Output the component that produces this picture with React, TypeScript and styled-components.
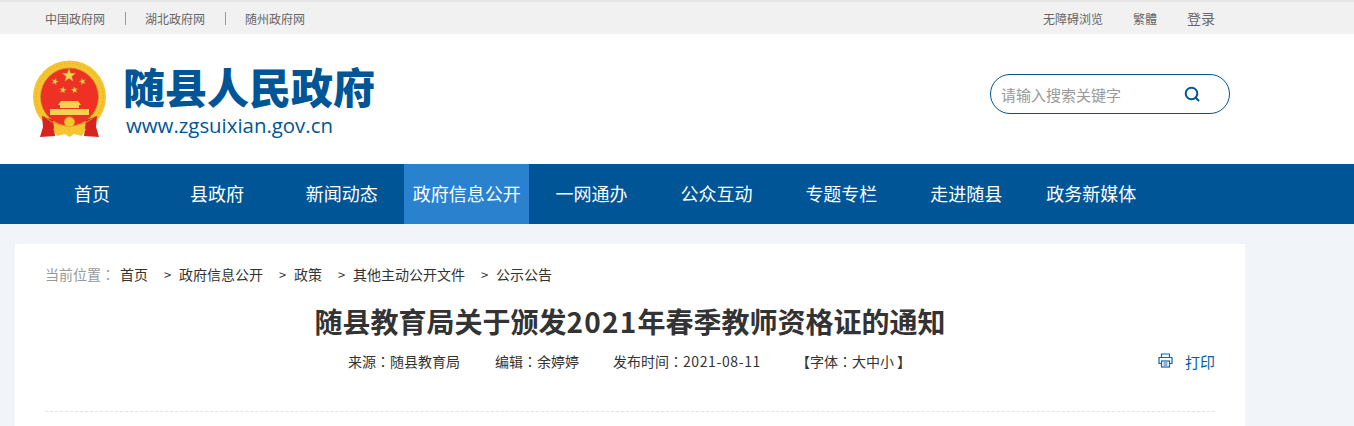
import styled, { createGlobalStyle } from "styled-components";

const GlobalStyle = createGlobalStyle`
  html, body {
    margin: 0;
    padding: 0;
    background: #f1f4f8;
    font-family: "Noto Sans CJK SC", "Liberation Sans", sans-serif;
  }
`;

const TopBar = styled.div`
  display: flex;
  justify-content: space-between;
  align-items: center;
  height: 32px;
  padding: 0 139px 0 45px;
  border-top: 2px solid #e6e6e6;
  background: #f1f1f1;
  font-size: 12px;
  color: #666;
`;

const TopLinks = styled.div`
  display: flex;
  align-items: center;
  gap: 19.5px;
`;

const TopDivider = styled.span`
  width: 1px;
  height: 13px;
  background: #999;
`;

const TopTools = styled.div`
  display: flex;
  align-items: center;
  gap: 30px;
`;

const Login = styled.span`
  font-size: 14px;
`;

const Header = styled.header`
  display: flex;
  justify-content: space-between;
  align-items: center;
  height: 130px;
  padding: 0 124px 0 32px;
  background: #fff;
`;

const Brand = styled.div`
  display: flex;
  align-items: center;
  gap: 15px;
`;

const BrandText = styled.div`
  display: flex;
  flex-direction: column;
  color: #005596;
`;

const BrandName = styled.div`
  font-size: 42px;
  line-height: 52px;
  font-weight: 900;
`;

const BrandUrl = styled.div`
  margin-left: 3px;
  font-family: "Open Sans", sans-serif;
  font-size: 20.4px;
  line-height: 26px;
  font-weight: 500;
`;

const Search = styled.div`
  display: flex;
  justify-content: space-between;
  align-items: center;
  box-sizing: border-box;
  width: 240px;
  height: 40px;
  margin-bottom: 10px;
  padding: 0 29px 0 10px;
  border: 1px solid #005596;
  border-radius: 20px;
  font-size: 15px;
  color: #999;
`;

const Nav = styled.nav`
  display: flex;
  height: 60px;
  padding-left: 29.6px;
  background: #005596;
`;

const NavItem = styled.a<{ $active?: boolean }>`
  width: 124.9px;
  line-height: 58px;
  text-align: center;
  font-size: 18px;
  color: #fff;
  background: ${({ $active }) => ($active ? "#2a82ce" : "transparent")};
`;

const Card = styled.main`
  box-sizing: border-box;
  height: 182px;
  margin: 20px 109px 0 15px;
  padding: 19px 30px 0;
  background: #fff;
`;

const Crumbs = styled.div`
  display: flex;
  align-items: center;
  height: 22px;
  font-size: 14px;
  color: #333;
`;

const CrumbLabel = styled.span`
  width: 75px;
  color: #999;
`;

const Crumb = styled.span`
  & + &::before {
    content: ">";
    display: inline-block;
    width: 15px;
    margin-left: 16px;
    font-size: 13px;
  }
`;

const Title = styled.h1`
  margin: 14px 0 0;
  font-size: 28px;
  line-height: 44px;
  font-weight: 700;
  text-align: center;
  color: #333;
`;

const Digits = styled.span`
  letter-spacing: 0.043em;
`;

const Colon = styled.span`
  font-family: "Noto Sans CJK TC", sans-serif;
`;

const MetaRow = styled.div`
  display: flex;
  align-items: center;
  height: 24px;
  margin-top: 6px;
  padding-left: 303px;
  font-size: 14px;
  color: #333;
`;

const MetaItem = styled.span<{ $gap: number }>`
  margin-right: ${({ $gap }) => $gap}px;
`;

const Print = styled.a`
  display: flex;
  align-items: center;
  gap: 12px;
  margin-left: auto;
  font-size: 15px;
  color: #005eab;

  svg {
    margin: -1px 0 0 1px;
  }
`;

const Rule = styled.div`
  margin-top: 38px;
  border-top: 1px dashed #e3e3e3;
`;

const navItems = ["首页", "县政府", "新闻动态", "政府信息公开", "一网通办", "公众互动", "专题专栏", "走进随县", "政务新媒体"];
const crumbs = ["首页", "政府信息公开", "政策", "其他主动公开文件", "公示公告"];

function Star({ x, y, r, rot = 0 }: { x: number; y: number; r: number; rot?: number }) {
  const points = Array.from({ length: 10 }, (_, i) => {
    const a = (i * Math.PI) / 5 - Math.PI / 2 + rot;
    const d = i % 2 ? r * 0.4 : r;
    return `${x + d * Math.cos(a)},${y + d * Math.sin(a)}`;
  }).join(" ");
  return <polygon points={points} fill="#f8d24e" stroke="#b8862b" strokeWidth="0.4" />;
}

function Emblem() {
  return (
    <svg width="76" height="80" viewBox="0 0 76 80">
      <circle cx="37.5" cy="38" r="36.5" fill="#f5c52f" />
      <circle cx="37.5" cy="38" r="33.5" fill="none" stroke="#e8b029" strokeWidth="1" strokeDasharray="2 2" />
      <circle cx="37.5" cy="38" r="29" fill="#ee3124" stroke="#c9922c" strokeWidth="0.8" />
      <Star x={37} y={16.5} r={7.2} />
      <Star x={23} y={22.5} r={3.6} rot={0.3} />
      <Star x={50.5} y={22.5} r={3.6} rot={-0.3} />
      <Star x={31} y={31} r={3.6} rot={0.15} />
      <Star x={42.5} y={31} r={3.6} rot={-0.15} />
      <path d="M29 42 L46 42 L49 46 L47 46 L47 49 L28 49 L28 46 L26 46 Z" fill="#f8d24e" />
      <rect x="18" y="50" width="39" height="6" fill="#f8d24e" />
      <path d="M10 57 L21 61 L23 77 L8 78 L11 68 Z" fill="#d8231f" />
      <path d="M65 57 L54 61 L52 77 L67 78 L64 68 Z" fill="#d8231f" />
      <path d="M12 57 C19 64 28 67 37.5 67 C47 67 56 64 63 57" fill="none" stroke="#d89b2a" strokeWidth="1" />
      <circle cx="37.5" cy="63" r="5" fill="#f5c52f" stroke="#e0a62c" strokeWidth="0.8" />
      <path d="M21 70 L33 68 L37.5 72 L42 68 L54 70 L50 77 L42 75 L37.5 78 L33 75 L25 77 Z" fill="#f5c52f" />
    </svg>
  );
}

function SearchIcon() {
  return (
    <svg width="16" height="16" viewBox="0 0 16 16" fill="none" stroke="#005596" strokeWidth="2">
      <circle cx="7.5" cy="7.5" r="5.8" />
      <path d="M11.5 11.5 L14.5 14.5" strokeLinecap="round" />
    </svg>
  );
}

function PrintIcon() {
  return (
    <svg width="15" height="15" viewBox="0 0 15 15" fill="none" stroke="#1a5fa8" strokeWidth="1.2">
      <path d="M3.5 4.5 V1 H11.5 V4.5" />
      <path d="M3.5 10.5 H1 V4.5 H14 V10.5 H11.5" />
      <rect x="3.5" y="8" width="8" height="6" />
      <path d="M5.5 10 H9.5 M5.5 12 H9.5" strokeWidth="1" />
    </svg>
  );
}

export default function App() {
  return (
    <>
      <GlobalStyle />
      <TopBar>
        <TopLinks>
          <span>中国政府网</span>
          <TopDivider />
          <span>湖北政府网</span>
          <TopDivider />
          <span>随州政府网</span>
        </TopLinks>
        <TopTools>
          <span>无障碍浏览</span>
          <span>繁體</span>
          <Login>登录</Login>
        </TopTools>
      </TopBar>
      <Header>
        <Brand>
          <Emblem />
          <BrandText>
            <BrandName>随县人民政府</BrandName>
            <BrandUrl>www.zgsuixian.gov.cn</BrandUrl>
          </BrandText>
        </Brand>
        <Search>
          <span>请输入搜索关键字</span>
          <SearchIcon />
        </Search>
      </Header>
      <Nav>
        {navItems.map((item) => (
          <NavItem key={item} $active={item === "政府信息公开"}>
            {item}
          </NavItem>
        ))}
      </Nav>
      <Card>
        <Crumbs>
          <CrumbLabel>当前位置<Colon>：</Colon></CrumbLabel>
          {crumbs.map((item) => (
            <Crumb key={item}>{item}</Crumb>
          ))}
        </Crumbs>
        <Title>
          随县教育局关于颁发<Digits>2021</Digits>年春季教师资格证的通知
        </Title>
        <MetaRow>
          <MetaItem $gap={35}>来源<Colon>：</Colon>随县教育局</MetaItem>
          <MetaItem $gap={34}>编辑<Colon>：</Colon>余婷婷</MetaItem>
          <MetaItem $gap={35}>发布时间<Colon>：</Colon><Digits>2021-08-11</Digits></MetaItem>
          <span>【字体<Colon>：</Colon>大中小 】</span>
          <Print>
            <PrintIcon />
            打印
          </Print>
        </MetaRow>
        <Rule />
      </Card>
    </>
  );
}
